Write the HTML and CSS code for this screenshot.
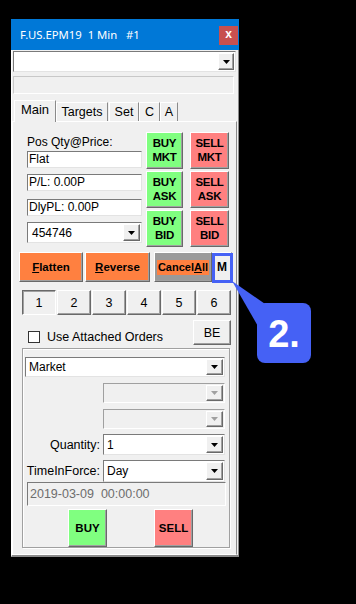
FILE: index.html
```html
<!DOCTYPE html>
<html lang="en">
<head>
    <meta charset="UTF-8">
    <meta name="viewport" content="width=device-width, initial-scale=1.0">
    <title>F.US.EPM19 1 Min #1</title>
    <link rel="stylesheet" href="styles.css">
</head>
<body>
    <div class="window">
        <div class="titlebar">
            <span class="title">F.US.EPM19  1 Min   #1</span>
            <span class="close-btn">x</span>
        </div>

        <div class="window-body">
            <div class="combo top-combo">
                <span class="combo-text"></span>
                <span class="drop-btn"><svg width="7" height="4" viewBox="0 0 7 4"><path d="M0 0h7L3.5 4z"/></svg></span>
            </div>
            <div class="status-box"></div>

            <div class="tabs">
                <span class="tab tab-active">Main</span>
                <span class="tab tab-targets">Targets</span>
                <span class="tab tab-set">Set</span>
                <span class="tab tab-c">C</span>
                <span class="tab tab-a">A</span>
            </div>

            <div class="panel">
                <div class="pos-row">
                    <div class="pos-fields">
                        <div class="pos-label">Pos Qty@Price:</div>
                        <div class="field field-flat">Flat</div>
                        <div class="field field-pl">P/L: 0.00P</div>
                        <div class="field field-dly">DlyPL: 0.00P</div>
                        <div class="combo account-combo">
                            <span class="combo-text">454746</span>
                            <span class="drop-btn"><svg width="7" height="4" viewBox="0 0 7 4"><path d="M0 0h7L3.5 4z"/></svg></span>
                        </div>
                    </div>
                    <div class="trade-grid">
                        <div class="btn btn-buy trade-btn">BUY<br>MKT</div>
                        <div class="btn btn-sell trade-btn">SELL<br>MKT</div>
                        <div class="btn btn-buy trade-btn">BUY<br>ASK</div>
                        <div class="btn btn-sell trade-btn">SELL<br>ASK</div>
                        <div class="btn btn-buy trade-btn">BUY<br>BID</div>
                        <div class="btn btn-sell trade-btn">SELL<br>BID</div>
                    </div>
                </div>

                <div class="action-row">
                    <div class="btn btn-orange btn-flatten"><u>F</u>latten</div>
                    <div class="btn btn-orange btn-reverse"><u>R</u>everse</div>
                    <div class="btn btn-cancel"><span class="cancel-label">Cancel<u>A</u>ll</span></div>
                    <div class="btn btn-m">M</div>
                </div>

                <div class="num-row">
                    <div class="btn num-btn num-pressed">1</div>
                    <div class="btn num-btn">2</div>
                    <div class="btn num-btn">3</div>
                    <div class="btn num-btn">4</div>
                    <div class="btn num-btn">5</div>
                    <div class="btn num-btn">6</div>
                </div>

                <div class="attach-row">
                    <span class="checkbox"></span>
                    <span class="attach-label">Use Attached Orders</span>
                    <div class="btn btn-be">BE</div>
                </div>

                <div class="group">
                    <div class="combo market-combo">
                        <span class="combo-text">Market</span>
                        <span class="drop-btn"><svg width="7" height="4" viewBox="0 0 7 4"><path d="M0 0h7L3.5 4z"/></svg></span>
                    </div>
                    <div class="combo combo-disabled">
                        <span class="combo-text"></span>
                        <span class="drop-btn"><svg width="7" height="4" viewBox="0 0 7 4"><path d="M0 0h7L3.5 4z"/></svg></span>
                    </div>
                    <div class="combo combo-disabled">
                        <span class="combo-text"></span>
                        <span class="drop-btn"><svg width="7" height="4" viewBox="0 0 7 4"><path d="M0 0h7L3.5 4z"/></svg></span>
                    </div>
                    <div class="form-row qty-row">
                        <span class="form-label">Quantity:</span>
                        <div class="combo form-combo">
                            <span class="combo-text">1</span>
                            <span class="drop-btn"><svg width="7" height="4" viewBox="0 0 7 4"><path d="M0 0h7L3.5 4z"/></svg></span>
                        </div>
                    </div>
                    <div class="form-row tif-row">
                        <span class="form-label">TimeInForce:</span>
                        <div class="combo form-combo">
                            <span class="combo-text">Day</span>
                            <span class="drop-btn"><svg width="7" height="4" viewBox="0 0 7 4"><path d="M0 0h7L3.5 4z"/></svg></span>
                        </div>
                    </div>
                    <div class="date-box">2019-03-09  00:00:00</div>
                    <div class="order-row">
                        <div class="btn btn-buy order-btn">BUY</div>
                        <div class="btn btn-sell order-btn order-sell">SELL</div>
                    </div>
                </div>
            </div>
        </div>
    </div>

    <!-- annotation -->
    <svg class="callout-tail" width="50" height="60" viewBox="0 0 50 60"><polygon points="4,3 40,28 42,42 31,50" fill="#4561f5"/></svg>
    <div class="m-highlight"></div>
    <div class="callout">2.</div>
</body>
</html>
```

FILE: styles.css
```css
* {
    box-sizing: border-box;
}

body {
    margin: 0;
    height: 604px;
    overflow: hidden;
    position: relative;
    background-color: #000;
    font-family: "Liberation Sans", Arial, sans-serif;
    font-size: 12px;
    color: #000;
}

.window {
    width: 228px;
    margin: 19px 0 0 11px;
}

.titlebar {
    height: 31px;
    background-color: #0078d7;
    color: #fff;
    display: flex;
    align-items: center;
    padding-left: 9px;
}

.title {
    font-family: "Noto Sans", sans-serif;
    font-size: 11.3px;
    white-space: pre;
    flex: 1;
    margin-top: -1px;
}

.close-btn {
    width: 19px;
    height: 19px;
    margin: 1px 1px 0 0;
    background-color: #c75050;
    color: #fff;
    font-weight: bold;
    font-size: 12px;
    display: flex;
    align-items: center;
    justify-content: center;
    padding-bottom: 2px;
}

.window-body {
    height: 507px;
    padding-top: 1px;
    background-color: #f0f0f0;
    border-left: 1px solid #fff;
    border-right: 1px solid #8a8a8a;
    border-bottom: 2px solid #8a8a8a;
}

/* combo boxes */
.combo {
    display: flex;
    align-items: center;
    background-color: #fff;
    border: 1px solid;
    border-color: #7a7a7a #e3e3e3 #e3e3e3 #7a7a7a;
    padding: 1px;
}

.combo-text {
    flex: 1;
    padding-left: 2px;
    white-space: nowrap;
}

.drop-btn {
    width: 17px;
    height: 100%;
    background-color: #f0f0f0;
    border: 1px solid;
    border-color: #fff #696969 #696969 #fff;
    box-shadow: inset -1px -1px 0 #a0a0a0;
    display: flex;
    align-items: center;
    justify-content: center;
}

.drop-btn svg {
    fill: #000;
}

.top-combo {
    width: 223px;
    height: 21px;
    margin-left: 1px;
}

.top-combo .drop-btn {
    width: 16px;
}

.status-box {
    width: 221px;
    height: 18px;
    margin: 4px 0 0 1px;
    border: 1px solid;
    border-color: #c8c8c8 #fff #fff #c8c8c8;
}

/* tabs */
.tabs {
    display: flex;
    align-items: flex-end;
    height: 21px;
    margin-top: 6px;
    padding-left: 2px;
}

.tab {
    height: 19px;
    border: 1px solid;
    border-bottom: none;
    border-color: #fff #8a8a8a #8a8a8a #fff;
    text-align: center;
    line-height: 18px;
    font-size: 12.5px;
}

.tab-active {
    width: 42px;
    height: 22px;
    line-height: 18px;
    margin-bottom: -1px;
    background-color: #f0f0f0;
    position: relative;
    font-size: 13px;
}

.tab-targets {
    width: 52px;
}

.tab-set {
    width: 30px;
    margin-left: 1px;
}

.tab-c {
    width: 21px;
}

.tab-a {
    width: 18px;
}

.panel {
    width: 225px;
    height: 434px;
    border: 1px solid;
    border-color: #fff #8a8a8a #fff #fff;
}

/* position and trade buttons */
.pos-row {
    display: flex;
    margin-top: 10px;
    padding-left: 14px;
}

.pos-fields {
    width: 115px;
}

.pos-label {
    height: 19px;
    padding-top: 3px;
    line-height: 14px;
}

.field {
    height: 17px;
    background-color: #fff;
    border: 1px solid;
    border-color: #7a7a7a #e3e3e3 #e3e3e3 #7a7a7a;
    padding-left: 1px;
    line-height: 15px;
    white-space: nowrap;
}

.field-pl {
    margin-top: 6px;
}

.field-dly {
    margin-top: 8px;
}

.account-combo {
    height: 21px;
    margin-top: 6px;
}

.account-combo .combo-text {
    padding-left: 3px;
}

.btn {
    display: flex;
    align-items: center;
    justify-content: center;
    background-color: #f0f0f0;
    border: 1px solid;
    border-color: #fff #696969 #696969 #fff;
    box-shadow: inset -1px -1px 0 #a0a0a0;
    text-align: center;
}

.btn-buy {
    background-color: #80ff80;
}

.btn-sell {
    background-color: #ff8080;
}

.btn-orange {
    background-color: #ff8040;
}

.trade-grid {
    display: grid;
    grid-template-columns: 37px 39px;
    grid-template-rows: repeat(3, 37px);
    column-gap: 7px;
    row-gap: 2px;
    margin-left: 4px;
}

.trade-btn {
    font-weight: bold;
    font-size: 11.5px;
    line-height: 14px;
    letter-spacing: -0.3px;
    padding-bottom: 2px;
}

/* flatten / reverse / cancel */
.action-row {
    display: flex;
    height: 30px;
    margin-top: 5px;
    padding-left: 6px;
    font-weight: bold;
    font-size: 11.5px;
}

.btn-flatten {
    width: 64px;
    margin-right: 2px;
}

.btn-reverse {
    width: 65px;
    margin-right: 4px;
}

.btn-cancel {
    width: 58px;
    background-color: #9a9a9a;
    font-size: 11px;
}

.cancel-label {
    background-color: #ff8040;
    padding: 1px 1px 2px;
}

.btn-m {
    width: 20px;
    font-size: 12px;
}

.num-row {
    display: grid;
    grid-template-columns: repeat(6, 1fr);
    column-gap: 1px;
    width: 209px;
    height: 25px;
    margin: 8px 0 0 9px;
}

.num-btn {
    font-size: 12.5px;
}

.num-pressed {
    border-color: #696969 #fff #fff #696969;
    box-shadow: inset 1px 1px 0 #a0a0a0;
}

.attach-row {
    display: flex;
    align-items: flex-start;
    height: 25px;
    margin-top: 5px;
    padding-left: 15px;
}

.checkbox {
    width: 12px;
    height: 12px;
    margin-top: 11px;
    background-color: #fff;
    border: 1px solid #333;
}

.attach-label {
    margin: 10px 0 0 7px;
    line-height: 14px;
    font-size: 12.5px;
}

.btn-be {
    width: 38px;
    height: 25px;
    margin: 0 5px 0 auto;
    font-size: 12.5px;
}

/* order entry group */
.group {
    width: 208px;
    height: 200px;
    margin: 3px 0 0 9px;
    border: 1px solid #a0a0a0;
    box-shadow: inset 1px 1px 0 #fff, 1px 1px 0 #fff;
}

.market-combo {
    width: 200px;
    height: 20px;
    margin: 8px 0 0 2px;
}

.combo-disabled {
    width: 122px;
    height: 20px;
    margin: 6px 0 0 80px;
    background-color: #f0f0f0;
    border-color: #a0a0a0 #fff #fff #a0a0a0;
}

.combo-disabled .drop-btn svg {
    fill: #a0a0a0;
}

.form-row {
    display: flex;
    align-items: center;
    margin-top: 5px;
}

.form-label {
    width: 80px;
    padding-right: 3px;
    text-align: right;
    font-size: 12.5px;
}

.form-combo {
    width: 122px;
    height: 21px;
}

.tif-row .form-combo {
    height: 22px;
}

.date-box {
    width: 199px;
    height: 24px;
    margin-left: 4px;
    padding-left: 2px;
    line-height: 22px;
    color: #6d6d6d;
    white-space: pre;
    font-size: 12.5px;
    border: 1px solid;
    border-color: #7a7a7a #fff #fff #7a7a7a;
}

.order-row {
    display: flex;
    margin-top: 3px;
}

.order-btn {
    width: 39px;
    height: 38px;
    margin-left: 45px;
    font-weight: bold;
    font-size: 11.5px;
}

.order-sell {
    margin-left: 47px;
}

/* callout */
.callout-tail {
    position: absolute;
    left: 228px;
    top: 278px;
}

.m-highlight {
    position: absolute;
    left: 212px;
    top: 253px;
    width: 21px;
    height: 30px;
    border: 3px solid #4561f5;
}

.callout {
    position: absolute;
    left: 257px;
    top: 303px;
    width: 54px;
    height: 60px;
    background-color: #4561f5;
    border-radius: 8px;
    color: #fff;
    font-weight: bold;
    font-size: 38px;
    display: flex;
    align-items: center;
    justify-content: center;
    padding-top: 2px;
}
```
